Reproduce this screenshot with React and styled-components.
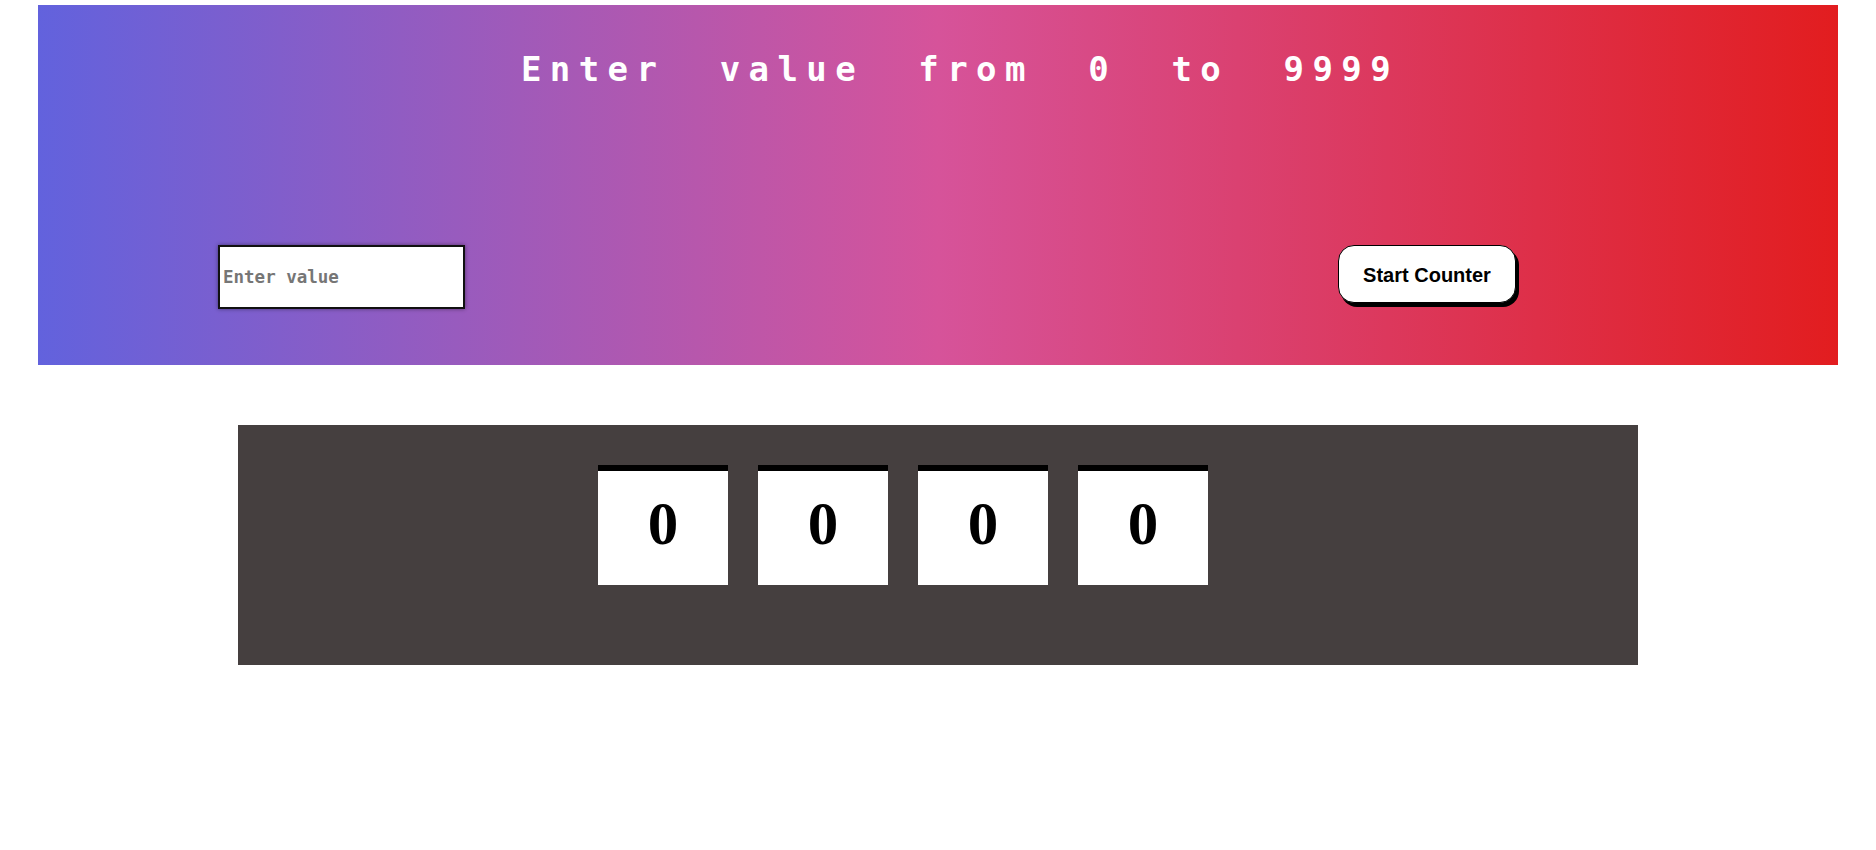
import { useState } from 'react';
import styled, { createGlobalStyle } from 'styled-components';

const GlobalStyle = createGlobalStyle`
  body {
    margin: 0;
    background: #fff;
    font-family: 'Liberation Sans', Arial, sans-serif;
  }
`;

const Page = styled.div`
  padding-top: 5px;
`;

const Header = styled.header`
  width: 1800px;
  height: 360px;
  margin: 0 auto;
  padding-top: 45px;
  box-sizing: border-box;
  background: linear-gradient(to right, #6262dd 0%, #d6539a 50%, #e21d1f 100%);
  display: flex;
  flex-direction: column;
`;

const Title = styled.h1`
  margin: 0;
  padding-left: 44px;
  height: 40px;
  line-height: 38px;
  text-align: center;
  color: #fff;
  font-family: 'DejaVu Sans Mono', 'Liberation Mono', monospace;
  font-size: 34px;
  font-weight: bold;
  letter-spacing: 8.4px;
  word-spacing: 25.5px;
`;

const Controls = styled.div`
  margin-top: 155px;
  padding: 0 322px 0 180px;
  display: flex;
  justify-content: space-between;
  align-items: flex-start;
`;

const ValueInput = styled.input`
  width: 247px;
  height: 64px;
  box-sizing: border-box;
  border: 2px solid #111;
  padding: 0 3px;
  background: #fff;
  box-shadow: 0 0 4px rgba(0, 0, 0, 0.45);
  font-family: 'DejaVu Sans Mono', 'Liberation Mono', monospace;
  font-size: 17.5px;
  font-weight: bold;
  outline: none;
  &::placeholder {
    color: #767676;
  }
`;

const StartButton = styled.button`
  width: 178px;
  height: 58px;
  padding-top: 4px;
  border: 1px solid #000;
  border-radius: 16px;
  background: #fff;
  box-shadow: 3px 4px 0 #000;
  color: #000;
  font-family: 'Liberation Sans', Arial, sans-serif;
  font-size: 20px;
  font-weight: bold;
  cursor: pointer;
`;

const Panel = styled.section`
  width: 1400px;
  height: 240px;
  margin: 60px auto 0;
  padding: 40px 0 0 360px;
  box-sizing: border-box;
  background: #453f3f;
  display: flex;
  gap: 30px;
  align-items: flex-start;
`;

const Digit = styled.div`
  width: 130px;
  height: 120px;
  box-sizing: border-box;
  border-top: 6px solid #000;
  background: #fff;
  display: flex;
  align-items: center;
  justify-content: center;
  padding-bottom: 9px;
  color: #000;
  font-family: 'Liberation Serif', 'Times New Roman', serif;
  font-size: 61px;
  font-weight: bold;
`;

const App = () => {
  const [value, setValue] = useState('');
  const [count, setCount] = useState(0);

  const start = () => {
    const target = Math.max(0, Math.min(9999, parseInt(value, 10) || 0));
    setCount(target);
  };

  const digits = String(count).padStart(4, '0').split('');

  return (
    <Page>
      <GlobalStyle />
      <Header>
        <Title>Enter value from 0 to 9999</Title>
        <Controls>
          <ValueInput
            type='number'
            placeholder='Enter value'
            value={value}
            onChange={(e) => setValue(e.target.value)}
          />
          <StartButton onClick={start}>Start Counter</StartButton>
        </Controls>
      </Header>

      <Panel>
        {digits.map((d, i) => (
          <Digit key={i}>{d}</Digit>
        ))}
      </Panel>
    </Page>
  );
};

export default App;
